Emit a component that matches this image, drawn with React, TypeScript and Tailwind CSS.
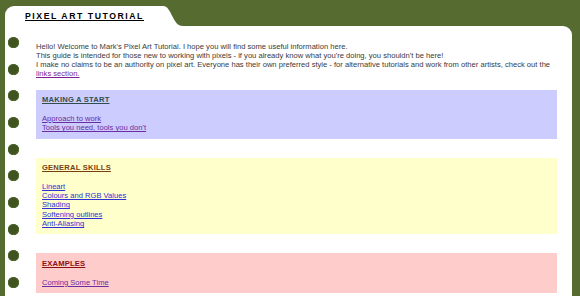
import React from "react"

type Section = {
  title: string
  bg: string
  head: string
  link: string
  links: string[]
}

const sections: Section[] = [
  {
    title: "MAKING A START",
    bg: "bg-[#ccccff]",
    head: "text-[#2f4f4f]",
    link: "text-[#6a2ea0]",
    links: ["Approach to work", "Tools you need, tools you don't"],
  },
  {
    title: "GENERAL SKILLS",
    bg: "bg-[#ffffcc]",
    head: "text-[#7a3e0c]",
    link: "text-[#2f2fd8]",
    links: ["Lineart", "Colours and RGB Values", "Shading", "Softening outlines", "Anti-Aliasing"],
  },
  {
    title: "EXAMPLES",
    bg: "bg-[#ffcccc]",
    head: "text-[#8b1010]",
    link: "text-[#6a2ea0]",
    links: ["Coming Some Time"],
  },
]

function Holes() {
  return (
    <div className="flex w-[31px] shrink-0 flex-col pt-[3px]">
      {Array.from({ length: 10 }).map((_, i) => (
        <div key={i} className="flex h-[26.7px] items-center pl-[3px]">
          <span className="block size-[11px] rounded-full bg-[#3f5421] shadow-[inset_0_0_0_1px_#4d6429]" />
        </div>
      ))}
    </div>
  )
}

function Box({ section }: { section: Section }) {
  return (
    <div className={`${section.bg} px-[6px] pt-[5.5px] pb-[6px]`}>
      <h2 className={`font-bold tracking-[0.2px] underline ${section.head}`}>{section.title}</h2>
      <div className="h-[9.33px]" />
      {section.links.map((l) => (
        <div key={l}>
          <a href="#" className={`underline ${section.link}`}>
            {l}
          </a>
        </div>
      ))}
    </div>
  )
}

export default function App() {
  return (
    <div className="flex h-[296px] w-[580px] flex-col overflow-hidden bg-[#566b30] pt-[6px] pr-[8px] pl-[5px] font-['Liberation_Sans',Arial,sans-serif]">
      <div className="flex h-[20px] shrink-0">
        <div className="w-[158px] rounded-tl-[9px] bg-white pt-[5px] pl-[20px]">
          <h1 className="text-[8.7px] leading-[10px] font-bold tracking-[1.55px] text-black underline">PIXEL ART TUTORIAL</h1>
        </div>
        <svg width="20" height="20" viewBox="0 0 20 20" className="block">
          <path d="M0 0 C9 0 9 20 20 20 L0 20 Z" fill="#ffffff" />
        </svg>
      </div>
      <div className="flex flex-1 rounded-tr-[9px] bg-white">
        <Holes />
        <div className="flex-1 pt-[15.5px] pr-[15px] text-[7.6px] leading-[9.33px] text-[#3a3a3a]">
          <p>Hello! Welcome to Mark's Pixel Art Tutorial. I hope you will find some useful information here.</p>
          <p>This guide is intended for those new to working with pixels - if you already know what you're doing, you shouldn't be here!</p>
          <p>
            I make no claims to be an authority on pixel art. Everyone has their own preferred style - for alternative tutorials and work from other artists, check out the{" "}
            <a href="#" className="text-[#7d1f8f] underline">
              links section.
            </a>
          </p>
          <div className="mt-[11px] flex flex-col gap-[19px]">
            {sections.map((s) => (
              <Box key={s.title} section={s} />
            ))}
          </div>
        </div>
      </div>
    </div>
  )
}
